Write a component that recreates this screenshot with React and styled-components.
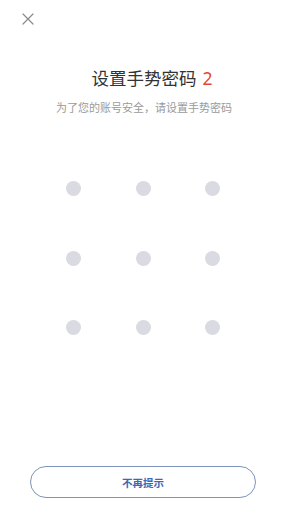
import React from "react";
import styled, { createGlobalStyle } from "styled-components";

const GlobalStyle = createGlobalStyle`
  html, body {
    margin: 0;
    padding: 0;
    background: #ffffff;
  }
  body {
    font-family: "Noto Sans CJK SC", "Noto Sans", sans-serif;
  }
`;

const Page = styled.div`
  width: 288px;
  height: 520px;
  display: flex;
  flex-direction: column;
  align-items: center;
  background: #ffffff;
  box-sizing: border-box;
`;

const TopBar = styled.div`
  align-self: stretch;
  height: 38px;
  padding-left: 21px;
  display: flex;
  align-items: center;
`;

const CloseButton = styled.button`
  width: 13px;
  height: 13px;
  padding: 0;
  border: none;
  background: none;
  display: flex;
  align-items: center;
  justify-content: center;
  cursor: pointer;
`;

const Title = styled.h1`
  position: relative;
  margin: 28px 0 0;
  height: 24px;
  font-size: 17.5px;
  line-height: 24px;
  font-weight: 400;
  color: #333333;
  letter-spacing: 0;
`;

const Step = styled.span`
  position: absolute;
  left: 100%;
  margin-left: 6px;
  top: 0;
  color: #e5453b;
  font-family: "Noto Sans", sans-serif;
`;

const Subtitle = styled.p`
  margin: 9px 0 0;
  font-size: 11px;
  line-height: 16px;
  color: #9a9a9a;
`;

const Grid = styled.div`
  margin-top: 66px;
  display: grid;
  grid-template-columns: repeat(3, 15px);
  grid-template-rows: repeat(3, 15px);
  column-gap: 54.5px;
  row-gap: 54.5px;
  margin-left: -2px;
`;

const Dot = styled.div`
  width: 15px;
  height: 15px;
  border-radius: 50%;
  background: #d9dae2;
`;

const Footer = styled.div`
  margin-top: auto;
  margin-bottom: 22px;
  margin-left: -2px;
`;

const OutlineButton = styled.button`
  width: 226px;
  height: 32px;
  border: 1px solid #7d93b9;
  border-radius: 16px;
  background: #ffffff;
  color: #3d67b2;
  font-family: "Noto Sans CJK SC", sans-serif;
  font-size: 10.5px;
  font-weight: 600;
  cursor: pointer;
`;

export default function App() {
  const dots = Array.from({ length: 9 }, (_, i) => i);

  return (
    <>
      <GlobalStyle />
      <Page>
        <TopBar>
          <CloseButton aria-label="关闭">
            <svg width="12" height="12" viewBox="0 0 12 12">
              <path d="M1 1 L11 11 M11 1 L1 11" stroke="#8a8a8a" strokeWidth="1.2" strokeLinecap="round" />
            </svg>
          </CloseButton>
        </TopBar>
        <Title>
          设置手势密码
          <Step>2</Step>
        </Title>
        <Subtitle>为了您的账号安全，请设置手势密码</Subtitle>
        <Grid>
          {dots.map((d) => (
            <Dot key={d} />
          ))}
        </Grid>
        <Footer>
          <OutlineButton>不再提示</OutlineButton>
        </Footer>
      </Page>
    </>
  );
}
